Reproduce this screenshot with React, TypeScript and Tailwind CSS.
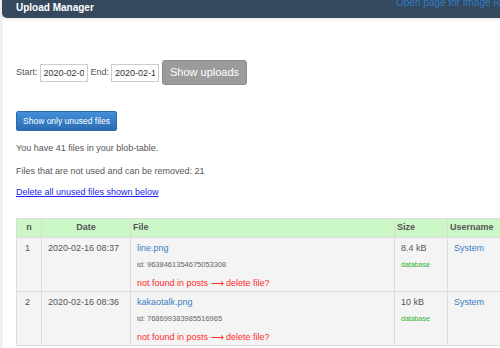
const rows = [
  {
    n: 1,
    date: "2020-02-16 08:37",
    file: "line.png",
    id: "9638461354675053308",
    size: "8.4 kB",
    user: "System",
  },
  {
    n: 2,
    date: "2020-02-16 08:36",
    file: "kakaotalk.png",
    id: "768699383985516965",
    size: "10 kB",
    user: "System",
  },
];

export default function App() {
  return (
    <div className="w-[500px] h-[348px] overflow-hidden flex bg-[#eef0f2] font-['Liberation_Sans',Arial,sans-serif]">
      <div className="w-[3px] shrink-0" />
      <div className="flex-1 flex flex-col bg-white min-w-0">
        {/* top bar */}
        <div className="h-[18px] shrink-0 bg-[#35495e] rounded-bl-[5px] -ml-px flex items-start justify-between shadow-[0_2px_2px_rgba(0,0,0,0.08)]">
          <span className="pl-[14px] pt-[3px] text-[10px] leading-[10px] font-bold text-white">
            Upload Manager
          </span>
          <span className="-mt-[2px] text-[10px] leading-[10px] text-[#2f7cc2] whitespace-nowrap w-[104px] overflow-hidden">
            Open page for Image Rota
          </span>
        </div>

        <div className="pl-[13px] pt-[42px] text-[#555]">
          {/* date filter */}
          <div className="flex items-center h-[25px] text-[9px]">
            <span className="mr-[2px] text-[#555]">Start:</span>
            <input
              readOnly
              value="2020-02-01"
              className="w-[48px] h-[18px] border border-[#ccc] px-[3px] text-[9px] text-[#333] outline-none"
            />
            <span className="ml-[3px] mr-[2px]">End:</span>
            <input
              readOnly
              value="2020-02-16"
              className="w-[48px] h-[18px] border border-[#ccc] px-[3px] text-[9px] text-[#333] outline-none"
            />
            <button className="ml-[3px] h-[25px] w-[85px] rounded-[3px] bg-[#9b9b9b] text-white text-[11px] border border-[#8c8c8c]">
              Show uploads
            </button>
          </div>

          <button className="mt-[26px] h-[20px] w-[101px] rounded-[2px] border border-[#2a6aad] bg-gradient-to-b from-[#428fd8] to-[#2b6db4] text-white text-[8.5px]">
            Show only unused files
          </button>

          <p className="mt-[12px] text-[9px] leading-[11px]">You have 41 files in your blob-table.</p>
          <p className="mt-[12px] text-[9px] leading-[11px]">Files that are not used and can be removed: 21</p>
          <p className="mt-[10px] text-[9px] leading-[11px] text-[#2222ee] underline">
            Delete all unused files shown below
          </p>

          {/* table */}
          <table className="mt-[20px] w-[487px] table-fixed border-collapse text-[9px] text-[#555]">
            <thead>
              <tr className="h-[19px] bg-[#ccf7c7]">
                <th className="w-[25px] border border-[#dcdcdc] font-bold text-center">n</th>
                <th className="w-[89px] border border-[#dcdcdc] font-bold text-center">Date</th>
                <th className="w-[264px] border border-[#dcdcdc] font-bold text-left pl-[2px]">File</th>
                <th className="w-[53px] border border-[#dcdcdc] font-bold text-left pl-[2px]">Size</th>
                <th className="border border-[#dcdcdc] font-bold text-left pl-[2px]">Username</th>
              </tr>
            </thead>
            <tbody>
              {rows.map((r) => (
                <tr key={r.n} className="h-[54px] bg-[#f4f4f4] align-top">
                  <td className="border border-[#dcdcdc] pl-[8px] pt-[5px] leading-[10px]">{r.n}</td>
                  <td className="border border-[#dcdcdc] pl-[6px] pt-[5px] leading-[10px]">{r.date}</td>
                  <td className="border border-[#dcdcdc] pl-[6px] pt-[5px]">
                    <div className="leading-[10px] text-[#3a7fc4]">{r.file}</div>
                    <div className="mt-[7px] leading-[10px] text-[7.5px] text-[#666]">id: {r.id}</div>
                    <div className="mt-[8px] leading-[10px] text-[#ff2b2b]">
                      not found in posts ⟶ delete file?
                    </div>
                  </td>
                  <td className="border border-[#dcdcdc] pl-[6px] pt-[5px]">
                    <div className="leading-[10px]">{r.size}</div>
                    <div className="mt-[7px] leading-[10px] text-[7px] text-[#2cb52c]">database</div>
                  </td>
                  <td className="border border-[#dcdcdc] pl-[6px] pt-[5px] leading-[10px] text-[#3a7fc4]">
                    {r.user}
                  </td>
                </tr>
              ))}
            </tbody>
          </table>
        </div>
      </div>
    </div>
  );
}
